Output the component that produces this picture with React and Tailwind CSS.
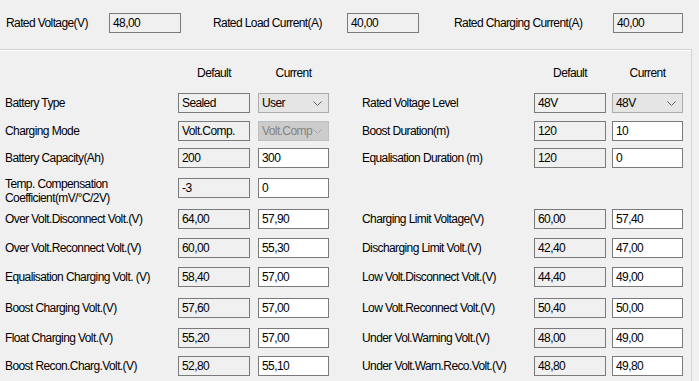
import React from "react";

function Box({ value, editable, w = "w-[72px]" }) {
  return (
    <div
      className={`${w} h-[20px] shrink-0 border border-[#7a7a7a] flex items-center pl-[3px] ${
        editable ? "bg-white" : "bg-[#f0f0f0]"
      }`}
    >
      {value}
    </div>
  );
}

function Chevron({ color }) {
  return (
    <svg width="9" height="5" viewBox="0 0 9 5" className="absolute right-[6px] top-[7px]">
      <polyline points="0.5,0.5 4.5,4.5 8.5,0.5" fill="none" stroke={color} strokeWidth="1" />
    </svg>
  );
}

function Drop({ value, disabled, w = "w-[71px]" }) {
  return (
    <div
      className={`${w} relative h-[20px] shrink-0 border flex items-center pl-[3px] ${
        disabled
          ? "bg-[#cccccc] border-[#bfbfbf] text-[#838383]"
          : "bg-[#e5e5e5] border-[#acacac]"
      }`}
    >
      <span className="whitespace-nowrap">{value}</span>
      <Chevron color={disabled ? "#a6a6a6" : "#606060"} />
    </div>
  );
}

function Left({ label, def, cur, two }) {
  return (
    <div className={`flex ${two ? "items-start" : "items-center"} pl-[5px] w-[329px] shrink-0`}>
      <div className={`w-[173px] shrink-0 ${two ? "leading-[14px] -mt-[1px]" : ""}`}>{label}</div>
      <Box value={def} />
      <div className="w-[8px] shrink-0" />
      {cur}
    </div>
  );
}

function Right({ label, def, cur }) {
  return (
    <div className="flex items-center ml-[33px]">
      <div className="w-[172px] shrink-0">{label}</div>
      <Box value={def} />
      <div className="w-[6px] shrink-0" />
      {cur}
    </div>
  );
}

const E = (v) => <Box value={v} editable w="w-[71px]" />;

const rows = [
  { mt: "mt-[13px]", l: ["Battery Type", "Sealed", <Drop value="User" />], r: ["Rated Voltage Level", "48V", <Drop value="48V" />] },
  { mt: "mt-[8px]", l: ["Charging Mode", "Volt.Comp.", <Drop value="Volt.Comp" disabled />], r: ["Boost Duration(m)", "120", E("10")] },
  { mt: "mt-[7px]", l: ["Battery Capacity(Ah)", "200", E("300")], r: ["Equalisation Duration (m)", "120", E("0")] },
  {
    mt: "mt-[10px]",
    two: true,
    l: [
      <>
        Temp. Compensation
        <br />
        Coefficient(mV/°C/2V)
      </>,
      "-3",
      E("0"),
    ],
    r: null,
  },
  { mt: "mt-[11px]", l: ["Over Volt.Disconnect Volt.(V)", "64,00", E("57,90")], r: ["Charging Limit Voltage(V)", "60,00", E("57,40")] },
  { mt: "mt-[9px]", l: ["Over Volt.Reconnect Volt.(V)", "60,00", E("55,30")], r: ["Discharging Limit Volt.(V)", "42,40", E("47,00")] },
  { mt: "mt-[9px]", l: ["Equalisation Charging Volt. (V)", "58,40", E("57,00")], r: ["Low Volt.Disconnect Volt.(V)", "44,40", E("49,00")] },
  { mt: "mt-[11px]", l: ["Boost Charging Volt.(V)", "57,60", E("57,00")], r: ["Low Volt.Reconnect Volt.(V)", "50,40", E("50,00")] },
  { mt: "mt-[10px]", l: ["Float Charging Volt.(V)", "55,20", E("57,00")], r: ["Under Vol.Warning Volt.(V)", "48,00", E("49,00")] },
  { mt: "mt-[8px]", l: ["Boost Recon.Charg.Volt.(V)", "52,80", E("55,10")], r: ["Under Volt.Warn.Reco.Volt.(V)", "48,80", E("49,80")] },
];

export default function App() {
  return (
    <div className="w-[699px] h-[381px] overflow-hidden bg-[#f0f0f0] text-black text-[12px] tracking-[-0.6px] font-['Liberation_Sans',Arial,sans-serif]">
      <div className="h-[49px] pt-[13px]">
        <div className="flex items-center h-[20px] pl-[6px]">
          <div className="w-[103px] shrink-0">Rated Voltage(V)</div>
          <Box value="48,00" />
          <div className="w-[32px] shrink-0" />
          <div className="w-[134px] shrink-0">Rated Load Current(A)</div>
          <Box value="40,00" />
          <div className="w-[35px] shrink-0" />
          <div className="w-[159px] shrink-0">Rated Charging Current(A)</div>
          <Box value="40,00" w="w-[70px]" />
        </div>
      </div>
      <div className="w-[692px] h-[340px] border-t border-r border-[#d5d5d5] shadow-[inset_0_1px_0_#ffffff]">
        <div className="flex h-[14px] mt-[16px] items-center">
          <div className="flex w-[329px] shrink-0 pl-[178px]">
            <div className="w-[72px] text-center">Default</div>
            <div className="w-[8px]" />
            <div className="w-[71px] text-center">Current</div>
          </div>
          <div className="flex ml-[205px]">
            <div className="w-[72px] text-center">Default</div>
            <div className="w-[6px]" />
            <div className="w-[71px] text-center">Current</div>
          </div>
        </div>
        {rows.map((r, i) => (
          <div key={i} className={`flex h-[20px] ${r.mt}`}>
            <Left label={r.l[0]} def={r.l[1]} cur={r.l[2]} two={r.two} />
            {r.r && <Right label={r.r[0]} def={r.r[1]} cur={r.r[2]} />}
          </div>
        ))}
      </div>
    </div>
  );
}
